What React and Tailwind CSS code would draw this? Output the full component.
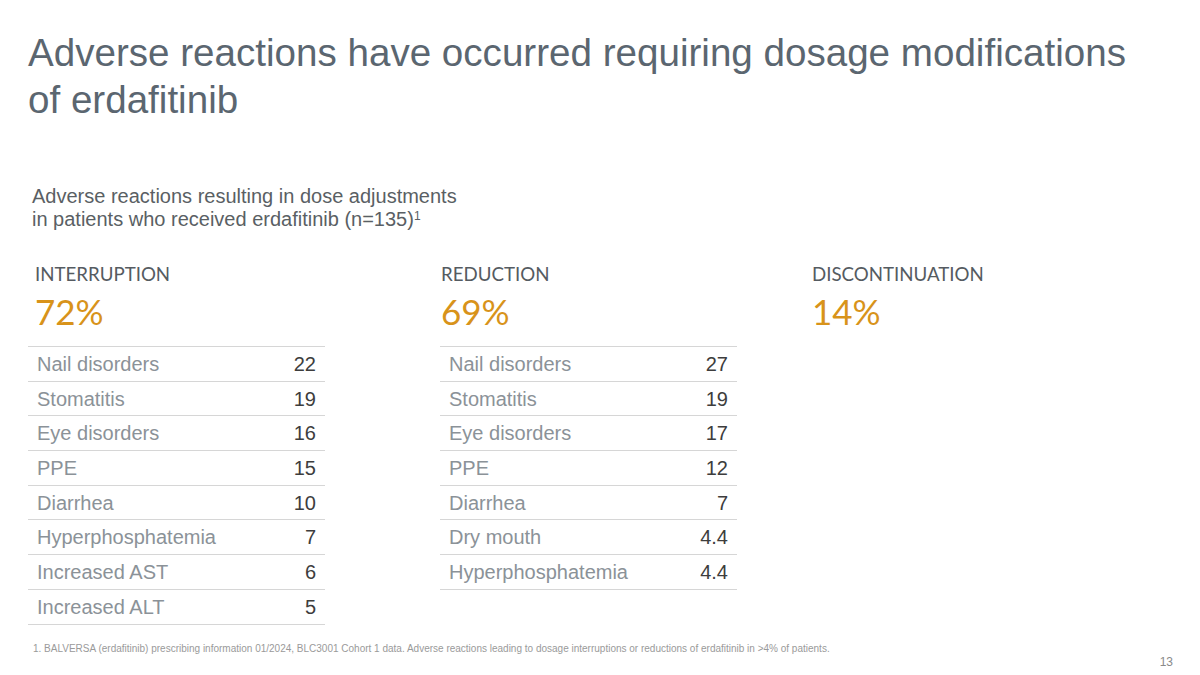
import React from "react";

const interruption = [
  ["Nail disorders", "22"],
  ["Stomatitis", "19"],
  ["Eye disorders", "16"],
  ["PPE", "15"],
  ["Diarrhea", "10"],
  ["Hyperphosphatemia", "7"],
  ["Increased AST", "6"],
  ["Increased ALT", "5"],
];

const reduction = [
  ["Nail disorders", "27"],
  ["Stomatitis", "19"],
  ["Eye disorders", "17"],
  ["PPE", "12"],
  ["Diarrhea", "7"],
  ["Dry mouth", "4.4"],
  ["Hyperphosphatemia", "4.4"],
];

function Column({ label, pct, rows, inset }) {
  return (
    <div className="flex flex-col w-[297px]">
      <div className={`${inset} font-[family-name:Lato,sans-serif] text-[18.7px] leading-[24px] text-[#555b61] h-[24px] mt-[262px]`}>
        {label}
      </div>
      <div className={`${inset} font-[family-name:Lato,sans-serif] text-[35px] leading-[44px] text-[#d8931a] mt-[3px]`}>
        {pct}
      </div>
      {rows && (
        <div className="mt-[13px] border-t border-[#d6d6d6]">
          {rows.map(([name, value]) => (
            <div
              key={name}
              className="flex items-center justify-between h-[34.7px] px-[9px] border-b border-[#d6d6d6] text-[20px]"
            >
              <span className="text-[#8b9298]">{name}</span>
              <span className="text-[#3d3d3d]">{value}</span>
            </div>
          ))}
        </div>
      )}
    </div>
  );
}

export default function App() {
  return (
    <div className="relative w-[1200px] h-[675px] bg-white overflow-hidden font-[family-name:Liberation_Sans,Arial,sans-serif]">
      <div className="absolute left-0 top-0 w-full">
        <h1 className="pl-[28px] pt-[29px] text-[38.6px] leading-[47px] text-[#5b6670]">
          Adverse reactions have occurred requiring dosage modifications
          <br />
          of erdafitinib
        </h1>
        <p className="pl-[32px] mt-[62px] text-[20px] leading-[23px] text-[#5a5f64]">
          Adverse reactions resulting in dose adjustments
          <br />
          in patients who received erdafitinib (n=135)
          <sup className="text-[12px]">1</sup>
        </p>
      </div>

      <div className="flex pl-[28px]">
        <Column label="INTERRUPTION" pct="72%" rows={interruption} inset="pl-[7px]" />
        <div className="w-[115px]" />
        <Column label="REDUCTION" pct="69%" rows={reduction} inset="pl-[1px]" />
        <div className="w-[72px]" />
        <Column label="DISCONTINUATION" pct="14%" inset="pl-[3px]" />
      </div>

      <div className="absolute left-0 bottom-0 w-full">
        <p className="pl-[33px] text-[10px] leading-[12px] text-[#9a9a9a]">
          1. BALVERSA (erdafitinib) prescribing information 01/2024, BLC3001 Cohort 1 data. Adverse reactions leading to dosage interruptions or reductions of erdafitinib in &gt;4% of patients.
        </p>
        <div className="flex justify-end pr-[27px] pb-[6px] text-[12px] leading-[14px] text-[#8a8a8a]">
          13
        </div>
      </div>
    </div>
  );
}
